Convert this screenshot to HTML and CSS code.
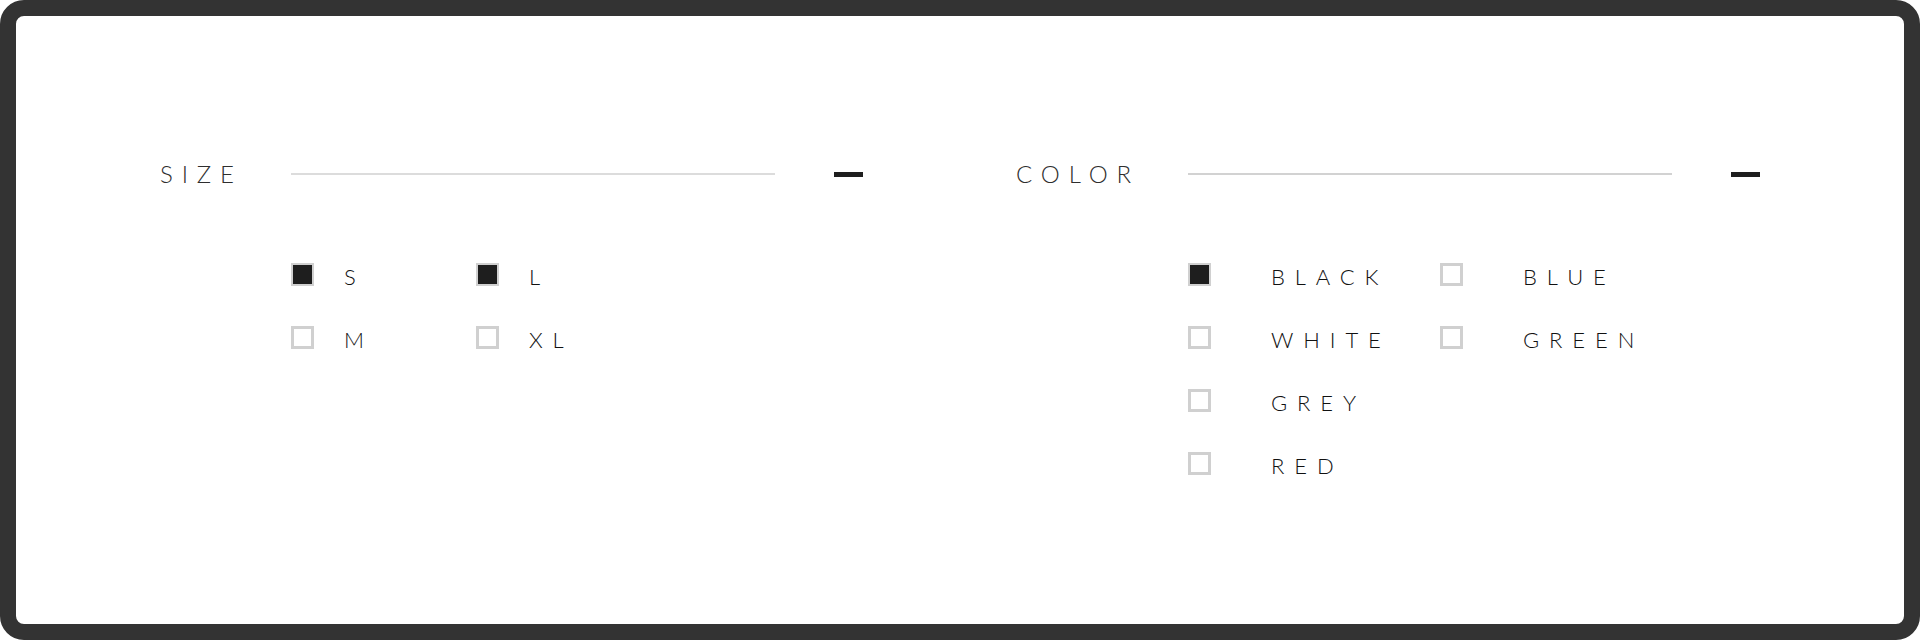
FILE: index.html
```html
<!DOCTYPE html>
<html lang="en">
<head>
    <meta charset="utf-8">
    <title>Filters</title>
    <meta name="viewport" content="width=device-width, initial-scale=1">
    <link rel="stylesheet" href="styles.css">
</head>
<body>
    <div class="frame">
        <div class="filters">
            <section class="filter filter-size">
                <h2 class="filter-title">Size</h2>
                <span class="filter-rule"></span>
                <span class="filter-toggle"></span>
                <ul class="options">
                    <li class="option checked"><span class="box"></span><span class="option-label">S</span></li>
                    <li class="option"><span class="box"></span><span class="option-label">M</span></li>
                    <li class="option checked"><span class="box"></span><span class="option-label">L</span></li>
                    <li class="option"><span class="box"></span><span class="option-label">XL</span></li>
                </ul>
            </section>
            <section class="filter filter-color">
                <h2 class="filter-title">Color</h2>
                <span class="filter-rule"></span>
                <span class="filter-toggle"></span>
                <ul class="options">
                    <li class="option checked"><span class="box"></span><span class="option-label">Black</span></li>
                    <li class="option"><span class="box"></span><span class="option-label">White</span></li>
                    <li class="option"><span class="box"></span><span class="option-label">Grey</span></li>
                    <li class="option"><span class="box"></span><span class="option-label">Red</span></li>
                    <li class="option"><span class="box"></span><span class="option-label">Blue</span></li>
                    <li class="option"><span class="box"></span><span class="option-label">Green</span></li>
                </ul>
            </section>
        </div>
    </div>
</body>
</html>
```

FILE: styles.css
```css
body{
    margin: 0;
    padding: 0;
    background-color: white;
    font-family: Lato, "Noto Sans", Arial, sans-serif;
}
.frame{
    box-sizing: border-box;
    height: 640px;
    border: 16px solid #333333;
    border-radius: 24px;
    background-color: white;
}
.filters{
    display: grid;
    grid-template-columns: 856px 856px;
    padding-top: 144px;
    padding-left: 144px;
}
.filter{
    display: grid;
    grid-template-columns: auto 484px auto;
    grid-template-rows: 28px auto;
    align-items: center;
    justify-content: start;
    row-gap: 75px;
}
.filter-title{
    margin: 0;
    padding-right: 48px;
    font-size: 24px;
    font-weight: 300;
    line-height: 28px;
    letter-spacing: 0.37em;
    text-transform: uppercase;
    color: #2e2e2e;
}
.filter-rule{
    height: 2px;
    background-color: #dcdcdc;
}
.filter-color .filter-rule{
    background-color: #d2d2d2;
}
.filter-toggle{
    width: 29px;
    height: 5px;
    margin-left: 59px;
    background-color: #1e1e1e;
}
.options{
    grid-column: 2 / 4;
    align-self: start;
    display: grid;
    grid-template-columns: 185px 185px;
    grid-template-rows: repeat(2, 23px);
    grid-auto-flow: column;
    row-gap: 40px;
    margin: 0;
    padding: 0;
    list-style: none;
}
.filter-color .options{
    grid-template-columns: 252px 252px;
    grid-template-rows: repeat(4, 23px);
}
.option{
    display: flex;
    align-items: flex-start;
}
.box{
    box-sizing: border-box;
    width: 23px;
    height: 23px;
    border: 3px solid #d0d0d0;
    background-color: white;
}
.checked .box{
    border-width: 2px;
    background-color: #1e1e1e;
}
.option-label{
    margin-top: 2px;
    margin-left: 30px;
    font-size: 22px;
    font-weight: 300;
    line-height: 23px;
    letter-spacing: 0.45em;
    text-transform: uppercase;
    color: #111111;
}
.filter-color .option-label{
    margin-left: 60px;
}
```
